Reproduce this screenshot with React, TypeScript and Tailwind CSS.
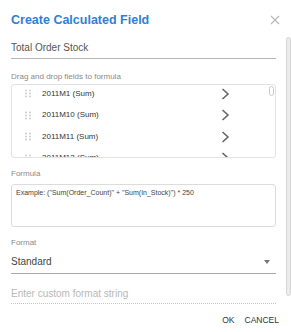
import React from 'react';

const fields = ['2011M1 (Sum)', '2011M10 (Sum)', '2011M11 (Sum)', '2011M12 (Sum)'];

const DragHandle = () => (
  <svg width="6" height="9" viewBox="0 0 6 9" className="shrink-0">
    {[1.5, 4.5, 7.5].map((y) =>
      [1, 5].map((x) => <circle key={`${x}-${y}`} cx={x} cy={y} r="0.9" fill="#c8c8c8" />)
    )}
  </svg>
);

const Chevron = () => (
  <svg width="9" height="12" viewBox="0 0 9 12" className="shrink-0">
    <path d="M1.5 1 L7 6 L1.5 11" fill="none" stroke="#666" strokeWidth="1.6" />
  </svg>
);

export default function App() {
  return (
    <div className="relative w-[291px] h-[332px] bg-white overflow-hidden font-['Liberation_Sans',Arial,sans-serif]">
      {/* header */}
      <div className="flex items-center justify-between h-[40px] pl-[11px] pr-[11px]">
        <h1 className="text-[12.5px] font-bold text-[#2f80d4] leading-none">Create Calculated Field</h1>
        <svg width="10" height="10" viewBox="0 0 10 10">
          <path d="M1 1 L9 9 M9 1 L1 9" stroke="#b8b8b8" strokeWidth="1.2" />
        </svg>
      </div>

      <div className="pl-[11px] pr-[15px]">
        <div className="pt-[2px] pb-[4px] border-b border-[#b5b5b5] text-[10px] leading-[12px] text-[#555]">
          Total Order Stock
        </div>

        <div className="mt-[13px] mb-[2px] text-[8px] leading-[10px] text-[#8a8a8a]">Drag and drop fields to formula</div>

        <div className="relative h-[74px] border border-[#e2e2e2] rounded-[3px] overflow-hidden">
          <div className="flex flex-col -mt-[2px]">
            {fields.map((f) => (
              <div key={f} className="flex items-center h-[21.5px] shrink-0 pl-[13px] pr-[45px]">
                <DragHandle />
                <span className="ml-[11px] text-[8px] leading-[10px] text-[#333] flex-1">{f}</span>
                <Chevron />
              </div>
            ))}
          </div>
          <div className="absolute right-[1px] top-[1px] w-[5px] h-[10px] rounded-[3px] border border-[#c9c9c9] bg-white" />
        </div>

        <div className="mt-[11px] mb-[5px] text-[8px] leading-[10px] text-[#8a8a8a]">Formula</div>
        <div className="h-[43px] border border-[#dcdcdc] rounded-[3px] pl-[4px] pt-[3px] text-[7px] leading-[10px] text-[#444]">
          Example: ("Sum(Order_Count)" + "Sum(In_Stock)") * 250
        </div>

        <div className="mt-[11px] text-[8px] leading-[10px] text-[#8a8a8a]">Format</div>
        <div className="mt-[8px] pb-[5px] border-b border-[#a8a8a8] flex items-center justify-between text-[10px] leading-[12px] text-[#444]">
          <span>Standard</span>
          <svg width="6" height="4" viewBox="0 0 6 4" className="mr-[6px]">
            <path d="M0 0 L6 0 L3 4 Z" fill="#777" />
          </svg>
        </div>

        <div className="mt-[14px] pb-[3px] border-b border-dotted border-[#c4c4c4] text-[10px] leading-[12px] text-[#b8b8b8]">
          Enter custom format string
        </div>
      </div>

      <div className="mt-[11px] flex justify-end gap-[10px] pr-[12px] text-[8.5px] leading-[10px] text-[#333]">
        <span>OK</span>
        <span>CANCEL</span>
      </div>

      {/* dialog scrollbar */}
      <div className="absolute left-[286px] top-[37px] w-[5px] h-[259px] rounded-[3px] border border-[#d6d6d6] bg-[#ececec]" />
    </div>
  );
}
